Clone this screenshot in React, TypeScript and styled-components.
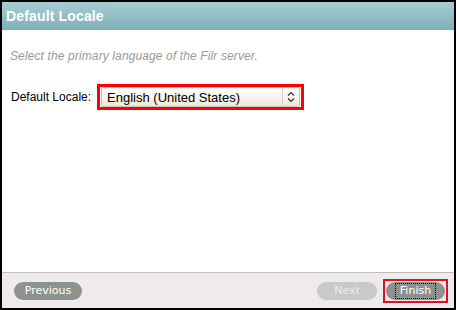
import React from 'react';
import styled, { createGlobalStyle } from 'styled-components';

const GlobalStyle = createGlobalStyle`
  html, body {
    margin: 0;
    padding: 0;
    background: #ffffff;
  }
`;

const Window = styled.div`
  width: 456px;
  height: 310px;
  box-sizing: border-box;
  border: 2px solid #000000;
  display: flex;
  flex-direction: column;
  font-family: 'Liberation Sans', Arial, sans-serif;
  background: #ffffff;
`;

const Header = styled.div`
  height: 28px;
  flex: none;
  display: flex;
  align-items: center;
  padding-left: 4px;
  background: linear-gradient(to bottom, #a6ccd2 0%, #94bfc7 50%, #7eafb9 100%);
  color: #ffffff;
  font-weight: bold;
  font-size: 14px;
  letter-spacing: 0.15px;
`;

const Body = styled.div`
  flex: 1;
  padding: 19px 8px 0 8px;
  display: flex;
  flex-direction: column;
`;

const Hint = styled.div`
  font-style: italic;
  font-size: 12px;
  letter-spacing: 0.12px;
  color: #9a9a9a;
  line-height: 14px;
`;

const FieldRow = styled.div`
  margin-top: 21px;
  display: flex;
  align-items: center;
  gap: 6px;
`;

const Label = styled.span`
  font-size: 12px;
  color: #000000;
  margin-left: 1px;
`;

const Highlight = styled.div`
  border: 3px solid #ff0000;
  display: flex;
`;

const SelectBox = styled.div`
  width: 199px;
  height: 20px;
  margin: 0 1px;
  box-sizing: border-box;
  border: 1px solid #c9c2b6;
  border-radius: 2px;
  background: linear-gradient(to bottom, #ffffff 0%, #f8f4ee 50%, #efe7da 100%);
  display: flex;
  align-items: center;
`;

const SelectText = styled.span`
  flex: 1;
  padding-left: 5px;
  font-size: 13px;
  color: #000000;
`;

const Spinner = styled.span`
  width: 16px;
  height: 18px;
  border-left: 1px solid #d6cfc3;
  display: flex;
  align-items: center;
  justify-content: center;
`;

const Footer = styled.div`
  height: 35px;
  flex: none;
  border-top: 1px solid #bdbdb5;
  background: #eeeaee;
  display: flex;
  align-items: center;
  padding: 0 6px 0 12px;
`;

const Spacer = styled.div`
  flex: 1;
`;

const PillButton = styled.div<{ $disabled?: boolean; $width: number }>`
  width: ${(p) => p.$width}px;
  height: 18px;
  box-sizing: border-box;
  border-radius: 9px;
  background: ${(p) => (p.$disabled ? '#c9c9c9' : '#8e928e')};
  color: ${(p) => (p.$disabled ? '#e9e9e9' : '#ffffff')};
  font-family: 'DejaVu Sans', Verdana, sans-serif;
  font-size: 11px;
  display: flex;
  align-items: center;
  justify-content: center;
`;

const FocusFrame = styled.div`
  margin-left: 6px;
  border: 2px solid #e3101e;
  padding: 1px;
  display: flex;
`;

const FocusText = styled.span`
  outline: 1px dotted #000000;
  padding: 1px 4px;
  line-height: 12px;
`;

const App = () => (
  <>
    <GlobalStyle />
    <Window>
      <Header>Default Locale</Header>
      <Body>
        <Hint>Select the primary language of the Filr server.</Hint>
        <FieldRow>
          <Label>Default Locale:</Label>
          <Highlight>
            <SelectBox>
              <SelectText>English (United States)</SelectText>
              <Spinner>
                <svg width="8" height="12" viewBox="0 0 8 12">
                  <path d="M1 4.5 L4 1.5 L7 4.5 M1 7.5 L4 10.5 L7 7.5" fill="none" stroke="#333" strokeWidth="1.2" />
                </svg>
              </Spinner>
            </SelectBox>
          </Highlight>
        </FieldRow>
      </Body>
      <Footer>
        <PillButton $width={68}>Previous</PillButton>
        <Spacer />
        <PillButton $disabled $width={60}>Next</PillButton>
        <FocusFrame>
          <PillButton $width={59}>
            <FocusText>Finish</FocusText>
          </PillButton>
        </FocusFrame>
      </Footer>
    </Window>
  </>
);

export default App;
